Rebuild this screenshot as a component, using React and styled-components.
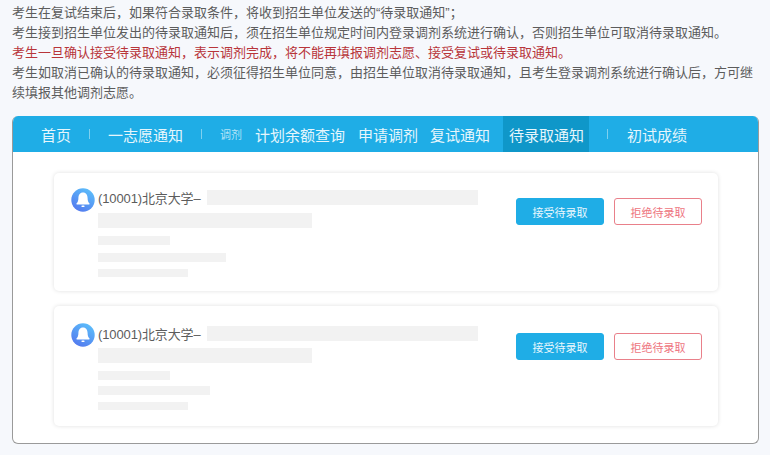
import React from "react";
import styled, { createGlobalStyle } from "styled-components";

const Global = createGlobalStyle`
  html, body { margin: 0; padding: 0; background: #f6f8fc; }
  body { font-family: "Liberation Sans", "Noto Sans CJK SC", sans-serif; width: 770px; height: 455px; overflow: hidden; }
`;
const Page = styled.div`
  display: flex; flex-direction: column; gap: 13px;
  padding: 3px 11px 0 12px; height: 455px; box-sizing: border-box;
`;
const Notes = styled.div`font-size: 13px; line-height: 20px;`;
const Note = styled.p`margin: 0; color: ${p => (p.$warn ? "#b8353a" : "#5c5c5c")};`;
const Panel = styled.section`
  height: 328px; box-sizing: border-box; background: #fff;
  border: 1px solid #9a9a9a; border-top: 0; border-radius: 6px; overflow: hidden;
  display: flex; flex-direction: column;
`;
const Nav = styled.nav`
  height: 36px; flex: none; background: #1fade6; display: flex; align-items: stretch;
  margin: 0 -1px; padding-left: 29px;
`;
const NavItem = styled.a`
  display: flex; align-items: center; font-size: 15px; color: #e6f6fc;
  margin-left: ${p => p.$ml || 0}px; padding: ${p => (p.$active ? "0 5px 0 6px" : "0")};
  background: ${p => (p.$active ? "#0f97c9" : "transparent")};
`;
const Sep = styled.span`
  align-self: center; width: 1px; height: 10px; background: #7fd0ef;
  margin-left: ${p => p.$ml}px;
`;
const Tag = styled.span`
  align-self: center; font-size: 11px; color: #b4e3f6; margin-left: 18px; width: 22px; white-space: nowrap;
`;
const Body = styled.div`
  flex: 1; display: flex; flex-direction: column; gap: 15px; padding: 21px 40px 0 41px;
`;
const Card = styled.article`
  height: ${p => p.$h}px; box-sizing: border-box; background: #fff; border-radius: 5px;
  box-shadow: 0 0 4px rgba(0,0,0,.13); display: flex; padding: ${p => p.$pad}px 16px 0 17px;
`;
const Bell = styled.svg`width: 24px; height: 24px; flex: none; margin-right: 3px;`;
const Info = styled.div`width: 380px; display: flex; flex-direction: column; align-items: flex-start;`;
const Title = styled.div`
  display: flex; align-items: center; height: 19px; margin-top: ${p => p.$t}px;
  font-size: 13px; color: #5c5c5c; white-space: nowrap; width: 380px;
`;
const TitleText = styled.span`width: 109px; flex: none; letter-spacing: -0.12px;`;
const Skeleton = styled.div`
  background: #f2f2f2; flex: none;
  width: ${p => p.$w}px; height: ${p => p.$h}px; margin-top: ${p => p.$t || 0}px;
`;
const Actions = styled.div`display: flex; gap: 10px; margin-left: 38px; padding-top: 10px; align-items: flex-start;`;
const Btn = styled.button`
  width: 88px; height: 27px; box-sizing: border-box; border-radius: 3px; padding: 0; font: inherit; font-size: 11px;
  background: ${p => (p.$reject ? "#fff" : "#1fade6")};
  color: ${p => (p.$reject ? "#ee7480" : "#eaf7fd")};
  border: 1px solid ${p => (p.$reject ? "#e9808a" : "#1fade6")};
`;

const BellIcon = ({ id }) => (
  <Bell viewBox="0 0 24 24">
    <defs>
      <linearGradient id={id} x1="0.8" y1="0" x2="0.2" y2="1">
        <stop offset="0" stopColor="#5cc0fb" />
        <stop offset="1" stopColor="#5377ee" />
      </linearGradient>
    </defs>
    <circle cx="12" cy="12" r="11.7" fill={`url(#${id})`} />
    <path d="M12 4.5c-3.2 0-4.6 2.6-4.6 5.5 0 2.8-.6 4.2-1.9 5.6-.3.4-.1.9.4.9h12.2c.5 0 .7-.5.4-.9-1.3-1.4-1.9-2.8-1.9-5.6 0-2.9-1.4-5.5-4.6-5.5z" fill="#fff" />
    <rect x="10.4" y="17.6" width="3.2" height="1.4" rx=".7" fill="#fff" />
  </Bell>
);

const Item = ({ id, h, pad, titleTop, w4, t2, t4 }) => (
  <Card $h={h} $pad={pad}>
    <BellIcon id={id} />
    <Info>
      <Title $t={titleTop}>
        <TitleText>(10001)北京大学–</TitleText>
        <Skeleton $w={271} $h={15} />
      </Title>
      <Skeleton $w={214} $h={15} $t={t2} />
      <Skeleton $w={72} $h={9} $t={8} />
      <Skeleton $w={w4} $h={9} $t={t4} />
      <Skeleton $w={90} $h={8} $t={7} />
    </Info>
    <Actions>
      <Btn>接受待录取</Btn>
      <Btn $reject>拒绝待录取</Btn>
    </Actions>
  </Card>
);

export default function App() {
  return (
    <Page>
      <Global />
      <Notes>
        <Note>考生在复试结束后，如果符合录取条件，将收到招生单位发送的“待录取通知”；</Note>
        <Note>考生接到招生单位发出的待录取通知后，须在招生单位规定时间内登录调剂系统进行确认，否则招生单位可取消待录取通知。</Note>
        <Note $warn>考生一旦确认接受待录取通知，表示调剂完成，将不能再填报调剂志愿、接受复试或待录取通知。</Note>
        <Note>考生如取消已确认的待录取通知，必须征得招生单位同意，由招生单位取消待录取通知，且考生登录调剂系统进行确认后，方可继续填报其他调剂志愿。</Note>
      </Notes>
      <Panel>
        <Nav>
          <NavItem>首页</NavItem>
          <Sep $ml={18} />
          <NavItem $ml={18}>一志愿通知</NavItem>
          <Sep $ml={18} />
          <Tag>调剂</Tag>
          <NavItem $ml={13}>计划余额查询</NavItem>
          <NavItem $ml={13}>申请调剂</NavItem>
          <NavItem $ml={12}>复试通知</NavItem>
          <NavItem $ml={13} $active>待录取通知</NavItem>
          <Sep $ml={18} />
          <NavItem $ml={19}>初试成绩</NavItem>
        </Nav>
        <Body>
          <Item id="b1" h={118} pad={15} titleTop={0} t2={6} t4={8} w4={128} />
          <Item id="b2" h={120} pad={17} titleTop={1} t2={5} t4={6} w4={112} />
        </Body>
      </Panel>
    </Page>
  );
}
